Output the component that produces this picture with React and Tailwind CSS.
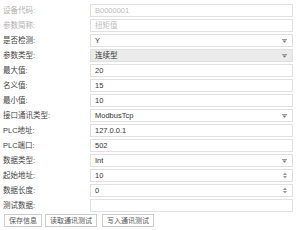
import React from 'react';

const rows = [
  { label: '设备代码:', value: 'B0000001', disabled: true },
  { label: '参数简称:', value: '扭矩值', disabled: true },
  { label: '是否检测:', value: 'Y', kind: 'select' },
  { label: '参数类型:', value: '连续型', kind: 'select', readonly: true },
  { label: '最大值:', value: '20' },
  { label: '名义值:', value: '15' },
  { label: '最小值:', value: '10' },
  { label: '接口通讯类型:', value: 'ModbusTcp', kind: 'select' },
  { label: 'PLC地址:', value: '127.0.0.1' },
  { label: 'PLC端口:', value: '502' },
  { label: '数据类型:', value: 'Int', kind: 'select' },
  { label: '起始地址:', value: '10', kind: 'number' },
  { label: '数据长度:', value: '0', kind: 'number' },
  { label: '测试数据:', value: '' },
];

function Caret() {
  return (
    <svg width="5" height="4" viewBox="0 0 5 4" className="mr-[5px]">
      <rect x="0" y="0" width="5" height="1" fill="#999" />
      <path d="M0.5 1.5 H4.5 L2.5 3.8 Z" fill="#777" />
    </svg>
  );
}

function Spinner() {
  return (
    <svg width="4" height="7" viewBox="0 0 4 7" className="mr-[5px]">
      <path d="M0 3 L2 0.5 L4 3 Z" fill="#999" />
      <path d="M0 4 L2 6.5 L4 4 Z" fill="#999" />
    </svg>
  );
}

function Field({ row }) {
  const bg = row.readonly ? 'bg-[#ebebeb]' : 'bg-white';
  const color = row.disabled ? 'text-[#bdbdbd]' : 'text-[#333]';
  return (
    <div className={`w-[203px] h-[13px] border border-[#e0e0e0] ${bg} flex items-center justify-between`}>
      <span className={`pl-[4px] ${color} leading-none`}>{row.value}</span>
      {row.kind === 'select' && <Caret />}
      {row.kind === 'number' && <Spinner />}
    </div>
  );
}

export default function App() {
  return (
    <div
      className="w-[300px] h-[230px] bg-white pt-[4px] pl-[3px] text-[7.5px] overflow-hidden"
      style={{ fontFamily: '"Liberation Sans", "Noto Sans CJK SC", sans-serif' }}
    >
      <div className="flex flex-col gap-[2px]">
        {rows.map((row) => (
          <div key={row.label} className="flex items-center">
            <div className={`w-[87px] ${row.disabled ? 'text-[#b0b0b0]' : 'text-[#444]'}`}>{row.label}</div>
            <Field row={row} />
          </div>
        ))}
      </div>
      <div className="flex mt-[2px] pl-[1px] gap-[3px] text-[7px]">
        <button className="h-[13px] px-[4px] border border-[#ccc] bg-white text-[#555] leading-none">保存信息</button>
        <button className="h-[13px] px-[4px] border border-[#ccc] bg-white text-[#555] leading-none">读取通讯测试</button>
        <button className="h-[13px] px-[4px] border border-[#ccc] bg-white text-[#555] leading-none ml-[2px]">写入通讯测试</button>
      </div>
    </div>
  );
}
